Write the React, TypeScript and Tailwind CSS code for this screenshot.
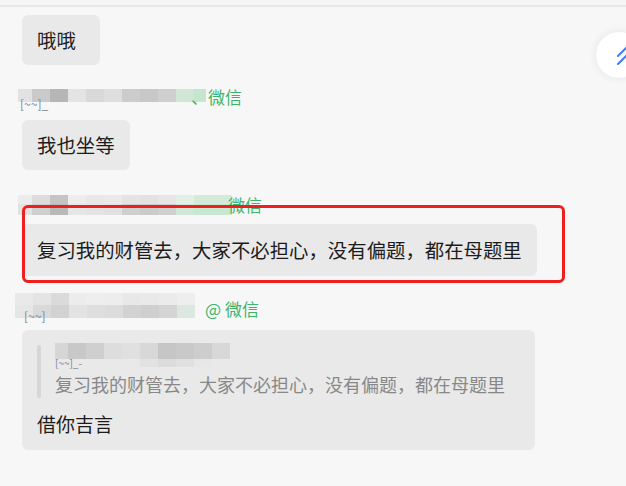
import React from "react";

const FONT = { fontFamily: '"Microsoft YaHei", "Noto Sans CJK SC", "Noto Sans", sans-serif' };

type Block = { c: string; w?: number };

// pixelated (mosaic) nickname strip
function Mosaic({ top, bottom, h1, h2 }: { top: Block[]; bottom?: Block[]; h1: number; h2?: number }) {
  return (
    <div className="flex flex-col">
      <div className="flex">
        {top.map((b, i) => (
          <div key={i} style={{ backgroundColor: b.c, width: b.w ?? 18, height: h1 }} />
        ))}
      </div>
      {bottom && (
        <div className="flex">
          {bottom.map((b, i) => (
            <div key={i} style={{ backgroundColor: b.c, width: b.w ?? 18, height: h2 }} />
          ))}
        </div>
      )}
    </div>
  );
}

function Bubble({ children, className = "" }: { children: React.ReactNode; className?: string }) {
  return (
    <div className={`flex items-center h-[50px] px-[15px] rounded-[6px] bg-[#e9e9e9] text-[19.4px] text-[#1c1c1c] whitespace-nowrap ${className}`}>
      {children}
    </div>
  );
}

export default function App() {
  return (
    <div className="relative w-[626px] h-[486px] overflow-hidden bg-[#f7f7f7]" style={FONT}>
      <div className="h-[5px] bg-[#f5f5f5]" />
      <div className="h-[2px] bg-[#e8e8e8]" />

      <div className="flex flex-col items-start pl-[22px] pt-[8px]">
        <Bubble className="w-[78px]">哦哦</Bubble>

        {/* name 1 */}
        <div className="relative flex items-end h-[20px] mt-[22px] -ml-[4px]">
          <div className="mb-[5px]">
            <Mosaic
              h1={13}
              top={[
                { c: "#e2e2e2", w: 14 },
                { c: "#cacaca" },
                { c: "#b6b6b6" },
                { c: "#e4e4e4" },
                { c: "#d9d9d9" },
                { c: "#dedede" },
                { c: "#cccccc" },
                { c: "#c8c8c8" },
                { c: "#cfcfcf" },
                { c: "#d2e6d7" },
                { c: "#c4e6cd", w: 12 },
              ]}
            />
          </div>
          <span className="absolute left-[2px] bottom-[-3px] text-[12px] leading-none text-[#7a8090]">[~~]_</span>
          <span className="relative text-[17px] leading-[20px] text-[#3cb56b] -ml-[15px]">、微信</span>
        </div>

        <Bubble className="mt-[13px]">我也坐等</Bubble>

        {/* name 2 */}
        <div className="relative flex items-start h-[20px] mt-[25px] -ml-[4px]">
          <Mosaic
            h1={9}
            h2={11}
            top={[
              { c: "#ececec", w: 14 },
              { c: "#dcdcdc" },
              { c: "#c4c4c4" },
              { c: "#ededed" },
              { c: "#e8e8e8" },
              { c: "#eaeaea" },
              { c: "#e4e4e4" },
              { c: "#e2e2e2" },
              { c: "#e6e6e6" },
              { c: "#e2f0e6" },
              { c: "#d3ecd9", w: 38 },
            ]}
            bottom={[
              { c: "#e2e2e2", w: 14 },
              { c: "#cfcfcf" },
              { c: "#b9b9b9" },
              { c: "#e6e6e6" },
              { c: "#e3e3e3" },
              { c: "#e1e1e1" },
              { c: "#cfcfcf" },
              { c: "#cbcbcb" },
              { c: "#d0d0d0" },
              { c: "#d2e6d7" },
              { c: "#c8e7d0", w: 38 },
            ]}
          />
          <span className="text-[17px] leading-[20px] text-[#3cb56b] -ml-[4px]">微信</span>
        </div>

        <Bubble className="mt-[9px] h-[52px]">复习我的财管去，大家不必担心，没有偏题，都在母题里</Bubble>

        {/* name 3 */}
        <div className="relative flex items-center h-[25px] mt-[17px] -ml-[7px]">
          <Mosaic
            h1={12}
            h2={13}
            top={[
              { c: "#e9e9e9" },
              { c: "#e4e4e4" },
              { c: "#dadada" },
              { c: "#ececec" },
              { c: "#eeeeee" },
              { c: "#ededed" },
              { c: "#e8e8e8" },
              { c: "#e9e9e9" },
              { c: "#ebebeb" },
              { c: "#eeeeee", w: 18 },
            ]}
            bottom={[
              { c: "#e6e6e6" },
              { c: "#d9d9d9" },
              { c: "#d2d2d2" },
              { c: "#e3e3e3" },
              { c: "#dedede" },
              { c: "#dcdcdc" },
              { c: "#d2d2d2" },
              { c: "#cfcfcf" },
              { c: "#d4d4d4" },
              { c: "#dce8df", w: 18 },
            ]}
          />
          <span className="absolute left-[9px] bottom-[-4px] text-[12px] leading-none text-[#7a8090]">[~~]</span>
          <span className="text-[17px] leading-[20px] text-[#3cb56b] ml-[10px] mt-[6px]">@ 微信</span>
        </div>

        {/* quoted reply */}
        <div className="mt-[12px] w-[513px] h-[120px] rounded-[6px] bg-[#e9e9e9] px-[15px] pt-[13px]">
          <div className="flex">
            <div className="w-[4px] h-[53px] mt-[2px] rounded-[2px] bg-[#d6d6d6]" />
            <div className="ml-[14px] flex flex-col">
              <div className="relative h-[30px]">
                <Mosaic
                  h1={16}
                  h2={8}
                  top={[
                    { c: "#d6d6d6", w: 13 },
                    { c: "#c8c8c8" },
                    { c: "#cfcfcf" },
                    { c: "#dddddd" },
                    { c: "#e0e0e0" },
                    { c: "#d8d8d8" },
                    { c: "#c6c6c6" },
                    { c: "#c9c9c9" },
                    { c: "#cdcdcd" },
                    { c: "#d8d8d8" },
                  ]}
                  bottom={[
                    { c: "#e9e9e9", w: 13 },
                    { c: "#e9e9e9" },
                    { c: "#e9e9e9" },
                    { c: "#e9e9e9" },
                    { c: "#e9e9e9" },
                    { c: "#e2e2e2" },
                    { c: "#dcdcdc" },
                    { c: "#e0e0e0" },
                    { c: "#e7e7e7" },
                  ]}
                />
                <span className="absolute left-0 top-[15px] text-[10px] leading-[10px] text-[#7a8090]">[~~]_-</span>
              </div>
              <div className="text-[18px] leading-[22px] text-[#888888] whitespace-nowrap">
                复习我的财管去，大家不必担心，没有偏题，都在母题里
              </div>
            </div>
          </div>
          <div className="mt-[14px] text-[19px] leading-[24px] text-[#1c1c1c]">借你吉言</div>
        </div>
      </div>

      {/* annotation highlight */}
      <div className="absolute left-[22px] top-[205px] w-[543px] h-[78px] border-[3px] border-[#f01e1e] rounded-[6px]" />

      {/* floating back-to-top button */}
      <div className="absolute left-[596px] top-[32px] w-[46px] h-[46px] rounded-full bg-white shadow-[0_0_10px_rgba(0,0,0,0.08)]" />
      <svg className="absolute left-[612px] top-[44px]" width="30" height="24" viewBox="0 0 30 24" fill="none">
        <path d="M6 12 L14 4 L22 12" stroke="#3d7ef5" strokeWidth="2" strokeLinecap="round" strokeLinejoin="round" />
        <path d="M6 20 L14 12 L22 20" stroke="#3d7ef5" strokeWidth="2" strokeLinecap="round" strokeLinejoin="round" />
      </svg>
    </div>
  );
}
